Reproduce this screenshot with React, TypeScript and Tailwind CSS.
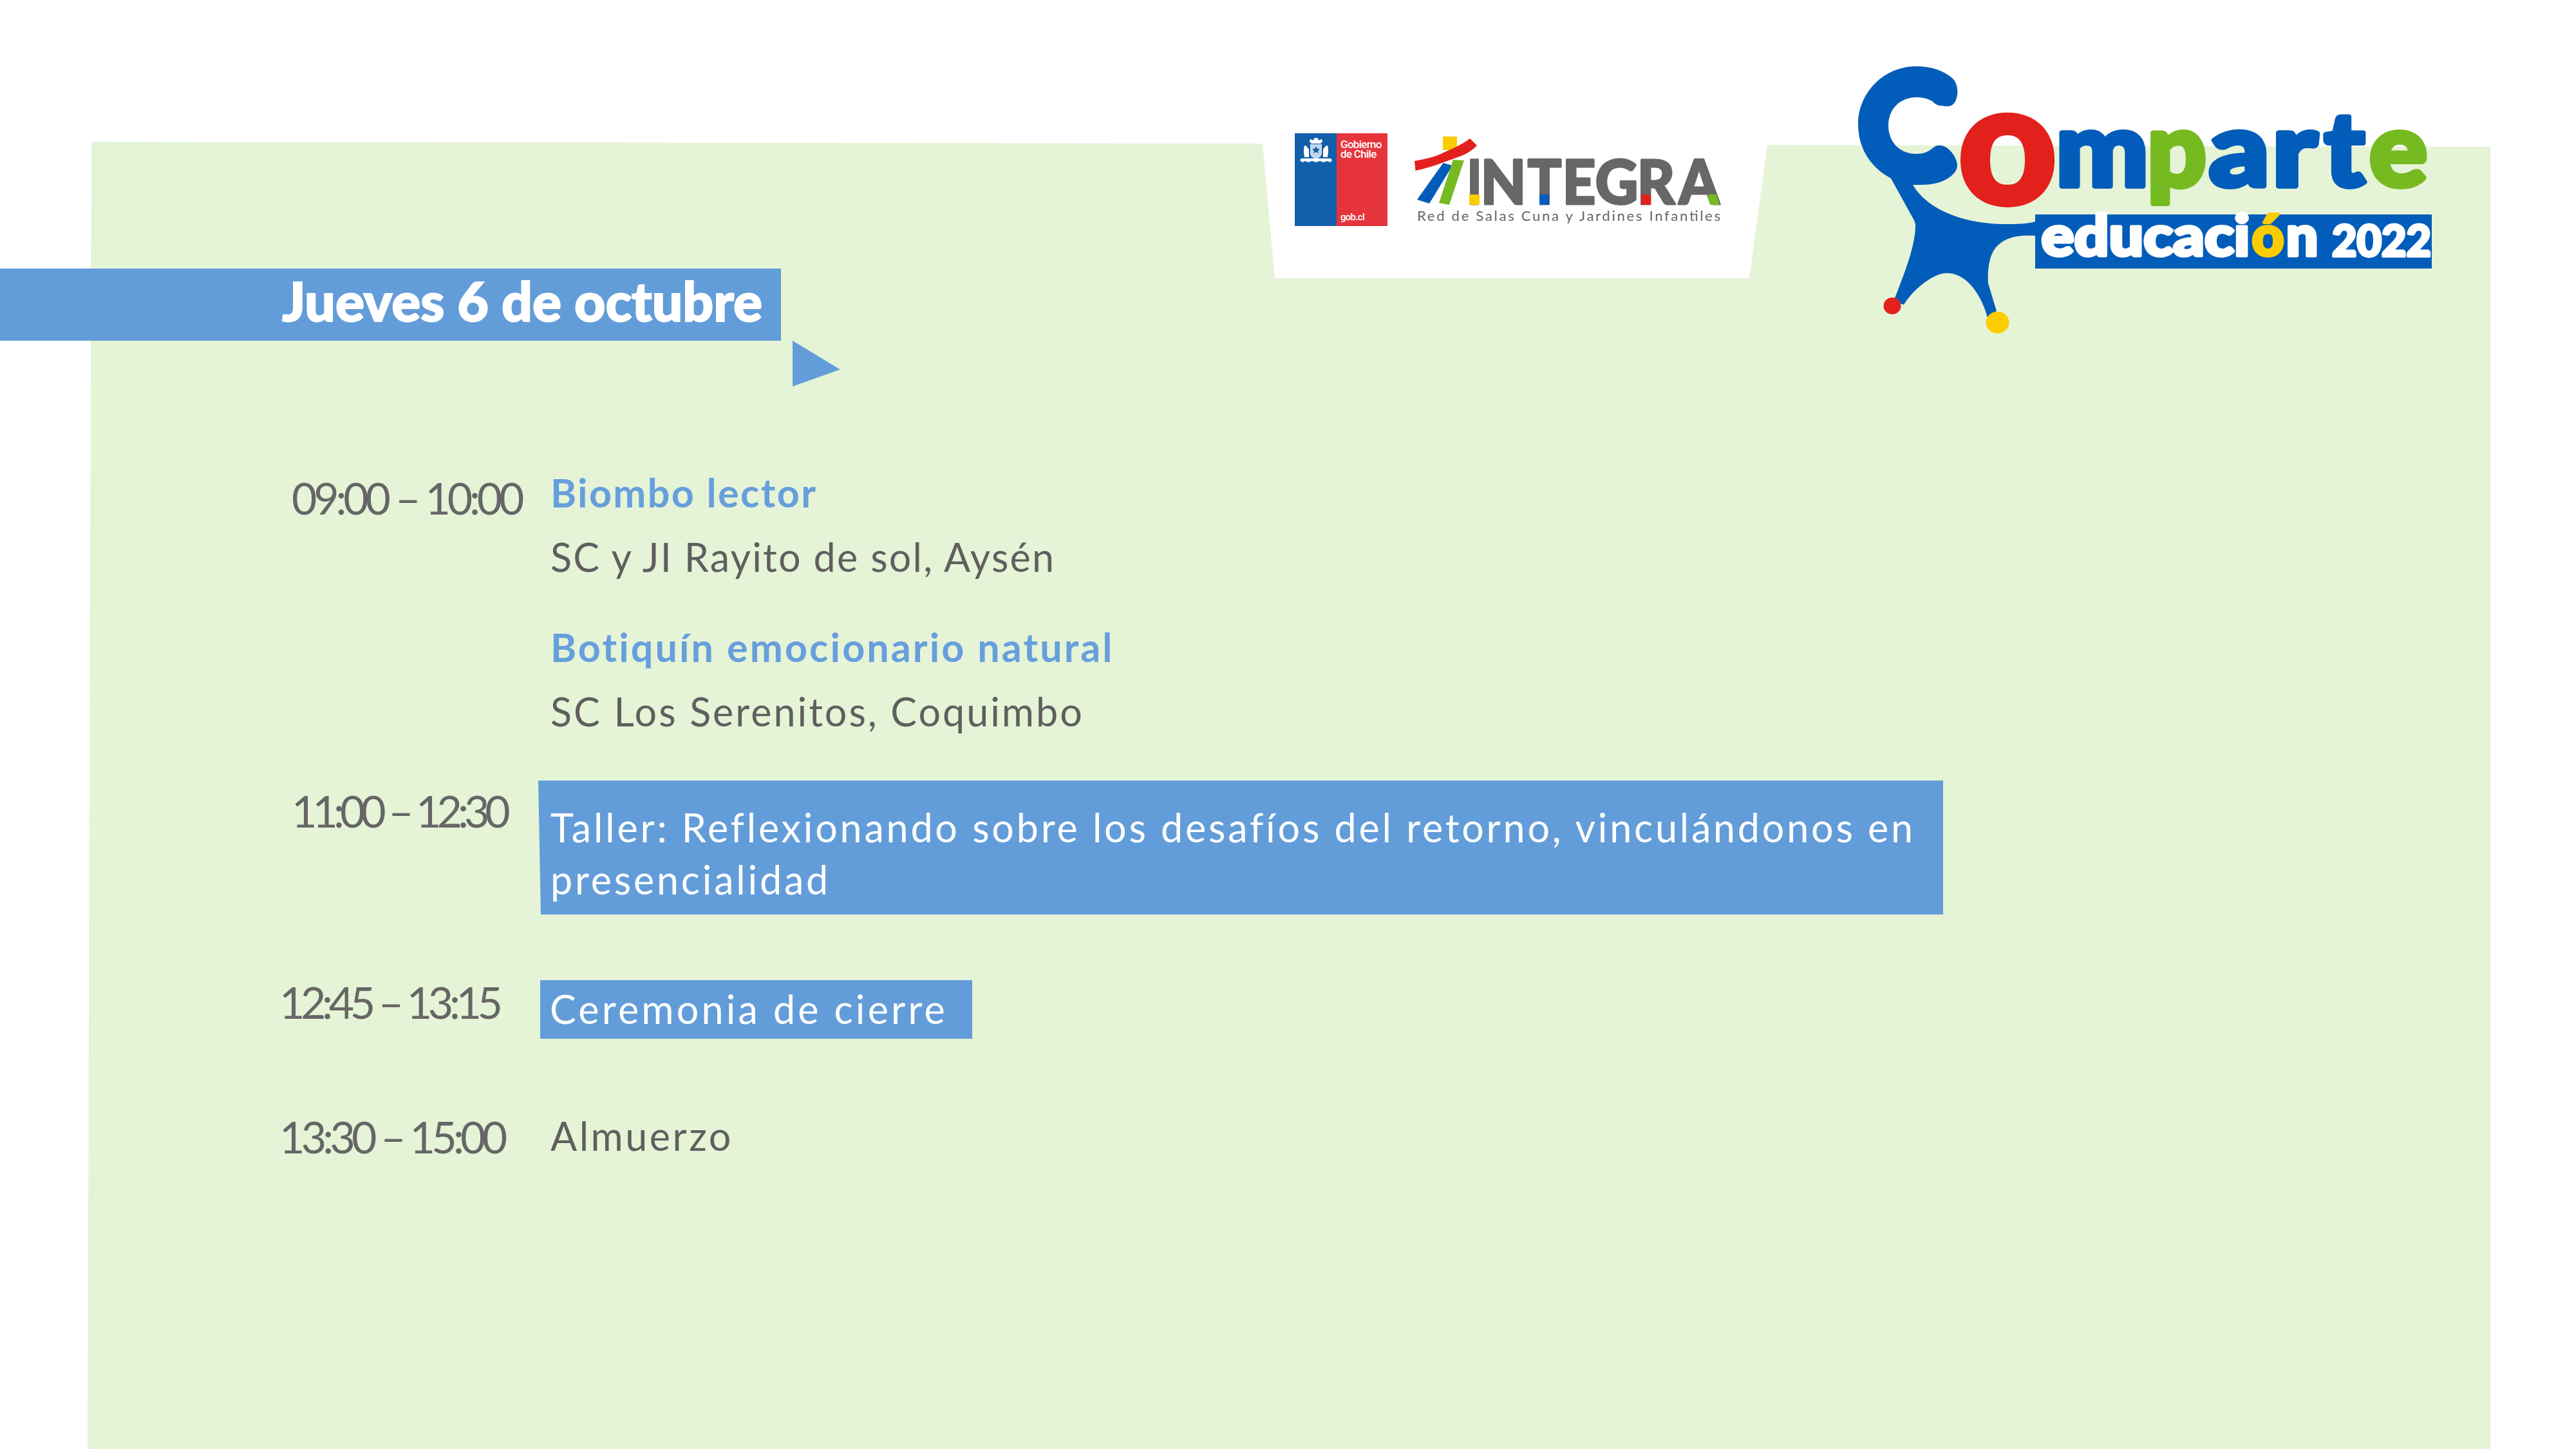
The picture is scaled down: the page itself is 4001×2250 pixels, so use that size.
type LetterProps = {
  x: number;
  y: number;
  w: number;
  size: number;
  fill: string;
  stroke?: number;
  children: string;
};

// one glyph of a logo, fitted to the width it has in the artwork
const Letter = ({ x, y, w, size, fill, stroke = 0, children }: LetterProps) => (
  <text
    x={x + stroke / 2}
    y={y}
    textLength={w - stroke}
    lengthAdjust="spacingAndGlyphs"
    fontSize={size}
    fill={fill}
    stroke={fill}
    strokeWidth={stroke}
    strokeLinejoin="round"
    className="[font-family:Lato,sans-serif] font-black"
  >
    {children}
  </text>
);

const GobLogo = () => (
  <div className="flex h-[144px] w-[144px] shrink-0 [font-family:Roboto,sans-serif] text-white">
    <div className="flex h-full w-[65px] justify-center bg-[#1260ab] pt-[7px]">
      <svg width="50" height="38" viewBox="0 0 50 38" fill="#ffffff">
        <path d="M25 0c3 0 4 2 4 4l5-2 1 4-3 3h-14l-3-3 1-4 5 2c0-2 1-4 4-4z" />
        <path d="M16 10h18v14c0 5-4 7-9 9-5-2-9-4-9-9z" fillOpacity="0.75" />
        <path d="M7 12c3 0 5 3 7 6v12H7l-1-8c0-4 0-7 1-10zM43 12c-3 0-5 3-7 6v12h7l1-8c0-4 0-7-1-10z" />
        <path d="M2 32h46l2 3-3 3-5-2-5 2-6-2-6 2-6-2-6 2-5-2-4 2-4-3z" />
        <path d="M25 13l2 4h4l-3 3 1 4-4-2-4 2 1-4-3-3h4z" fill="#1260ab" />
      </svg>
    </div>
    <div className="flex h-full w-[79px] flex-col bg-[#e6343c] pl-[6px] pt-[10px] text-[17px] font-medium leading-[15px] tracking-[-0.7px]">
      <span>Gobierno</span>
      <span>de Chile</span>
      <span className="mt-auto pb-[6px] text-[15px]">gob.cl</span>
    </div>
  </div>
);

const integraLetters = [
  { c: "I", x: 2277, w: 26 },
  { c: "N", x: 2298, w: 74 },
  { c: "T", x: 2371, w: 56 },
  { c: "E", x: 2425, w: 55 },
  { c: "G", x: 2476, w: 70 },
  { c: "R", x: 2541, w: 62 },
  { c: "A", x: 2606, w: 66 },
];

const IntegraLogo = () => (
  <svg width="490" height="145" viewBox="2190 205 490 145" className="ml-[35px] mt-[-2px] shrink-0">
    <path d="M2241 212h22v21h-22z" fill="#fbcd00" />
    <path d="M2241.5 253l14.500 4-36 59-19-6z" fill="#025cb9" />
    <path d="M2257 248l17 1-23 69-16-3z" fill="#76ba21" />
    <path d="M2197 250c18-3 34-7 47-14 16-7 29-13 39-21l11 11c-8 8-16 13-27 17-22 8-44 17-68.500 22z" fill="#e3211c" />
    {integraLetters.map((l) => (
      <Letter key={l.c} x={l.x} y={317} w={l.w} size={96} fill="#676767" stroke={3}>
        {l.c}
      </Letter>
    ))}
    <path d="M2282 302h16v16h-16z" fill="#fbcd00" />
    <path d="M2391 302h15v16h-15z" fill="#025cb9" />
    <path d="M2549 302h15v16h-15z" fill="#e3211c" />
    <path d="M2652 302h14l5 16h-15z" fill="#76ba21" />
    <text
      x="2201"
      y="343"
      textLength="471"
      fontSize="22"
      fill="#676767"
      className="[font-family:Lato,sans-serif] font-normal"
    >
      Red de Salas Cuna y Jardines Infantiles
    </text>
  </svg>
);

const compLetters = [
  { c: "m", x: 3189, w: 152, fill: "#025cb9" },
  { c: "p", x: 3331, w: 100, fill: "#76ba21" },
  { c: "a", x: 3427, w: 102, fill: "#025cb9" },
  { c: "r", x: 3525, w: 78, fill: "#025cb9" },
  { c: "t", x: 3606, w: 71, fill: "#025cb9" },
  { c: "e", x: 3676, w: 98, fill: "#76ba21" },
];

const ComparteLogo = () => (
  <svg width="920" height="440" viewBox="2870 90 920 440" className="ml-[190px] mt-[-117px] shrink-0">
    <path
      d="M2976 103C3000 103 3020 110 3033 122C3041 130 3042 145 3038 155C3033 168 3024 165 3014 164C3009 164 3005 161 3001 157C2994 153 2986 151 2978 151C2950 151 2933 170 2933 195C2933 220 2950 239 2977 239C2988 239 2996 235 3002 230C3006 226 3010 225 3015 226C3028 228 3040 245 3040 257C3040 270 3020 287 2985 287L2971 287C2990 320 3040 348 3117 348C3130 348 3148 348 3162 344L3162 366C3130 364 3108 370 3096 390C3088 404 3087 425 3088 440L3101 483L3087 493C3075 450 3050 424 3024 424C3005 424 2975 445 2957 473L2941 468C2960 420 2975 380 2975 350C2975 345 2972 340 2969 335L2937 277C2905 260 2886 230 2886 193C2886 145 2925 103 2976 103Z"
      fill="#025cb9"
    />
    <ellipse cx="2939" cy="475" rx="13.500" ry="13" fill="#e3211c" />
    <ellipse cx="3102.500" cy="500.700" rx="18" ry="17" fill="#fbcd00" />
    <Letter x={3037} y={316} w={162} size={262} fill="#e3211c" stroke={8}>
      o
    </Letter>
    {compLetters.map((l) => (
      <Letter key={l.c} x={l.x} y={289} w={l.w} size={160} fill={l.fill} stroke={8}>
        {l.c}
      </Letter>
    ))}
    <rect x="3161" y="333" width="616" height="84" fill="#025cb9" />
    <Letter x={3168} y={397} w={329} size={88} fill="#ffffff" stroke={5}>
      educaci
    </Letter>
    <Letter x={3495} y={397} w={55} size={88} fill="#fbcd00" stroke={5}>
      ó
    </Letter>
    <Letter x={3548} y={397} w={55} size={88} fill="#ffffff" stroke={5}>
      n
    </Letter>
    <Letter x={3620} y={398} w={158} size={66} fill="#ffffff" stroke={4}>
      2022
    </Letter>
  </svg>
);

const timeClass =
  "[font-family:Lato,sans-serif] text-[68px] font-normal leading-[100px] text-[#666666] whitespace-nowrap";
const titleClass =
  "[font-family:Lato,sans-serif] text-[61px] font-bold leading-[100px] text-[#669fdc] whitespace-nowrap";
const bodyClass =
  "[font-family:Lato,sans-serif] text-[61px] font-normal leading-[100px] text-[#5f5f5f] whitespace-nowrap";

const App = () => {
  return (
    <div className="relative h-[2250px] w-[4001px] overflow-hidden bg-white">
      <div className="absolute inset-0 bg-[#e5f3d6] [clip-path:polygon(142px_220px,1961px_223px,1980px_432px,2717px_432px,2745px_225px,3868px_228px,3868px_2250px,136px_2250px)]" />

      <div className="relative">
        <div className="flex h-[599px] items-start">
          <div className="w-[2011px] shrink-0 pt-[417px]">
            <div className="flex h-[112px] w-[1213px] items-center justify-end bg-[#639dd9] pb-[13px] pr-[29px]">
              <span className="[font-family:Lato,sans-serif] text-[84px] font-black leading-none text-white [-webkit-text-stroke:2px_white]">
                Jueves 6 de octubre
              </span>
            </div>
            <div className="ml-[1231px] h-[71px] w-[74px] bg-[#639dd9] [clip-path:polygon(0_0,100%_63%,0_100%)]" />
          </div>
          <div className="flex items-start pt-[207px]">
            <GobLogo />
            <IntegraLogo />
            <ComparteLogo />
          </div>
        </div>

        <div className="flex flex-col pl-[434px]">
          <div className="mt-[116px] flex items-start">
            <div className={`mt-[8px] w-[421px] pl-[19px] tracking-[-5.2px] ${timeClass}`}>09:00 – 10:00</div>
            <div className="flex flex-col">
              <div className={`tracking-[2.4px] ${titleClass}`}>Biombo lector</div>
              <div className={`tracking-[2.2px] ${bodyClass}`}>SC y JI Rayito de sol, Aysén</div>
              <div className={`mt-[40px] tracking-[3.1px] ${titleClass}`}>Botiquín emocionario natural</div>
              <div className={`tracking-[3px] ${bodyClass}`}>SC Los Serenitos, Coquimbo</div>
            </div>
          </div>

          <div className="mt-[57px] flex items-start">
            <div className={`mt-[-3px] w-[402px] pl-[19px] tracking-[-7px] ${timeClass}`}>11:00 – 12:30</div>
            <div className="h-[208px] w-[2182px] bg-[#639dd9] pl-[19px] pr-[30px] pt-[32px] [font-family:Lato,sans-serif] text-[61px] leading-[81px] tracking-[3.8px] text-white [clip-path:polygon(0_0,100%_0,100%_100%,4px_100%)]">
              Taller: Reflexionando sobre los desafíos del retorno, vinculándonos en presencialidad
            </div>
          </div>

          <div className="mt-[102px] flex items-start">
            <div className={`mt-[-16px] w-[405px] tracking-[-6.4px] ${timeClass}`}>12:45 – 13:15</div>
            <div className="h-[91px] w-[671px] bg-[#639dd9] pl-[15px] pt-[2px] [font-family:Lato,sans-serif] text-[61px] leading-[85px] tracking-[4.2px] text-white">
              Ceremonia de cierre
            </div>
          </div>

          <div className="mt-[101px] flex items-start">
            <div className={`mt-[1px] w-[421px] tracking-[-5.8px] ${timeClass}`}>13:30 – 15:00</div>
            <div className={`tracking-[3.5px] ${bodyClass}`}>Almuerzo</div>
          </div>
        </div>
      </div>
    </div>
  );
};

export default App;
